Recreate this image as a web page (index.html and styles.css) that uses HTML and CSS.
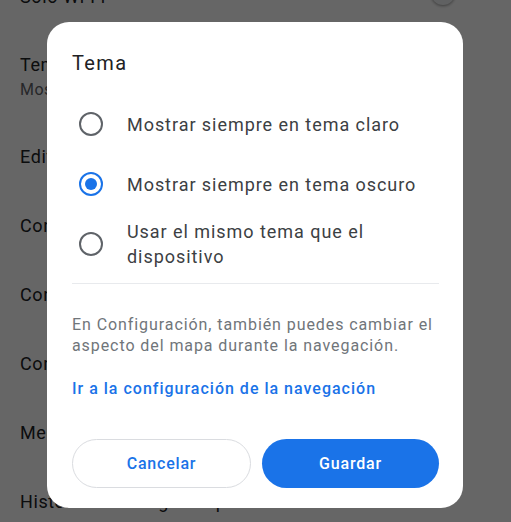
FILE: index.html
```html
<!DOCTYPE html>
<html lang="es">
<head>
<meta charset="UTF-8" />
<title>Configuración</title>
<link rel="stylesheet" href="styles.css">
</head>
<body>

<!-- Settings list behind the dialog -->
<ul class="settings">
  <li class="row">
    <span class="row-title">Solo Wi-Fi</span>
    <span class="toggle"><span class="thumb"></span></span>
  </li>
  <li class="row row-tall">
    <span class="row-title">Tema</span>
    <span class="row-sub">Mostrar siempre en tema oscuro</span>
  </li>
  <li class="row"><span class="row-title">Editar casa o trabajo</span></li>
  <li class="row"><span class="row-title">Configuración de ubicación</span></li>
  <li class="row"><span class="row-title">Configuración de contenido</span></li>
  <li class="row"><span class="row-title">Configuración de notificaciones</span></li>
  <li class="row"><span class="row-title">Mediciones de distancia</span></li>
  <li class="row"><span class="row-title">Historial de Google Maps</span></li>
</ul>

<div class="scrim"></div>

<!-- Theme dialog -->
<div class="dialog">
  <h2 class="dialog-title">Tema</h2>

  <div class="options">
    <label class="option">
      <span class="radio"></span>
      <span>Mostrar siempre en tema claro</span>
    </label>
    <label class="option">
      <span class="radio checked"></span>
      <span>Mostrar siempre en tema oscuro</span>
    </label>
    <label class="option">
      <span class="radio"></span>
      <span>Usar el mismo tema que el<br>dispositivo</span>
    </label>
  </div>

  <hr class="divider">

  <p class="note">En Configuración, también puedes cambiar el<br>aspecto del mapa durante la navegación.</p>
  <a class="link" href="#">Ir a la configuración de la navegación</a>

  <div class="actions">
    <button class="btn btn-outline">Cancelar</button>
    <button class="btn btn-filled">Guardar</button>
  </div>
</div>

</body>
</html>
```

FILE: styles.css
```css
html, body {
  margin: 0;
  height: 100%;
  overflow: hidden;
}
body {
  font-family: Roboto, "Noto Sans", Arial, sans-serif;
  background: #fff;
  color: #202124;
}

/* settings list */
.settings {
  list-style: none;
  margin: -38px 0 0;
  padding: 0;
}
.row {
  height: 69px;
  padding: 0 20px;
  display: flex;
  flex-direction: column;
  justify-content: center;
  position: relative;
}
.row-tall {
  height: 91px;
}
.row-title {
  font-size: 18px;
  line-height: 24px;
  color: #202124;
  letter-spacing: 0.6px;
}
.row-sub {
  font-size: 16px;
  line-height: 22px;
  margin-top: 2px;
  color: #5f6368;
  letter-spacing: 0.5px;
}
.toggle {
  position: absolute;
  right: 40px;
  top: 24px;
  width: 36px;
  height: 14px;
  border-radius: 7px;
  background: #bdc1c6;
}
.thumb {
  position: absolute;
  left: -4px;
  top: -5px;
  width: 24px;
  height: 24px;
  border-radius: 50%;
  background: #f1f3f4;
  box-shadow: 0 1px 3px rgba(0,0,0,0.4);
}

.scrim {
  position: fixed;
  inset: 0;
  background: rgba(0, 0, 0, 0.6);
}

/* dialog */
.dialog {
  position: fixed;
  left: 47px;
  top: 22px;
  width: 416px;
  box-sizing: border-box;
  padding: 28px 24px 20px 25px;
  background: #fff;
  border-radius: 22px;
}
.dialog-title {
  margin: 0;
  font-size: 20px;
  line-height: 26px;
  font-weight: 400;
  color: #202124;
  letter-spacing: 1.4px;
}
.options {
  margin-top: 18px;
}
.option {
  display: flex;
  align-items: center;
  gap: 24px;
  padding-left: 7px;
  min-height: 60px;
  font-size: 18px;
  line-height: 25px;
  color: #3c4043;
  letter-spacing: 0.95px;
}
.radio {
  flex: none;
  width: 24px;
  height: 24px;
  box-sizing: border-box;
  border: 2px solid #5f6368;
  border-radius: 50%;
  display: flex;
  align-items: center;
  justify-content: center;
}
.radio.checked {
  border-color: #1a73e8;
}
.radio.checked::after {
  content: "";
  width: 12px;
  height: 12px;
  border-radius: 50%;
  background: #1a73e8;
}
.divider {
  border: none;
  border-top: 1px solid #e8eaed;
  margin: 9px 0 0;
}
.note {
  margin: 30px 0 0;
  font-size: 16px;
  line-height: 21px;
  color: #70757a;
  letter-spacing: 0.92px;
}
.link {
  display: block;
  margin-top: 22px;
  font-size: 16px;
  line-height: 21px;
  font-weight: 500;
  color: #1a73e8;
  text-decoration: none;
  letter-spacing: 1px;
}
.actions {
  display: flex;
  gap: 11px;
  margin-top: 40px;
}
.btn {
  flex: 1;
  height: 49px;
  border-radius: 25px;
  font-family: inherit;
  font-size: 16px;
  font-weight: 500;
  letter-spacing: 0.8px;
  cursor: pointer;
}
.btn-outline {
  background: #fff;
  border: 1px solid #dadce0;
  color: #1a73e8;
}
.btn-filled {
  background: #1a73e8;
  border: none;
  color: #fff;
}
```
